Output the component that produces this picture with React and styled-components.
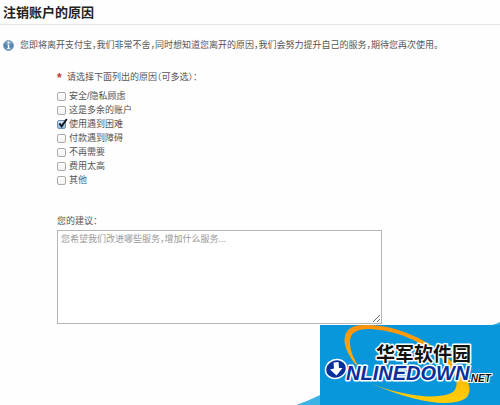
import React, { useState } from "react";
import styled, { createGlobalStyle } from "styled-components";

const reasons = [
	{ id: "safety", label: "安全/隐私顾虑" },
	{ id: "extra", label: "这是多余的账户" },
	{ id: "usage", label: "使用遇到困难" },
	{ id: "payment", label: "付款遇到障碍" },
	{ id: "unneeded", label: "不再需要" },
	{ id: "cost", label: "费用太高" },
	{ id: "other", label: "其他" },
];

export default function App() {
	const [selected, setSelected] = useState(["usage"]);

	const toggle = (id) =>
		setSelected((prev) =>
			prev.includes(id) ? prev.filter((x) => x !== id) : [...prev, id]
		);

	return (
		<Page>
			<GlobalStyle />
			<Title>注销账户的原因</Title>
			<Notice>
				<InfoIcon />
				<p>
					您即将离开支付宝，我们非常不舍，同时想知道您离开的原因，我们会努力提升自己的服务，期待您再次使用。
				</p>
			</Notice>
			<Form>
				<Reasons>
					<Legend>
						<Required>*</Required>请选择下面列出的原因（可多选）：
					</Legend>
					{reasons.map((reason) => (
						<Reason key={reason.id}>
							<Tick>
								<input
									type="checkbox"
									checked={selected.includes(reason.id)}
									onChange={() => toggle(reason.id)}
								/>
								{selected.includes(reason.id) && (
									<svg viewBox="0 0 11 11" aria-hidden="true">
										<path
											d="M2.4 5.4 4.6 8.4 9.8 1"
											fill="none"
											stroke="#10182a"
											strokeWidth="2"
										/>
									</svg>
								)}
							</Tick>
							{reason.label}
						</Reason>
					))}
				</Reasons>
				<SuggestLabel htmlFor="suggest">您的建议：</SuggestLabel>
				<Suggest
					id="suggest"
					placeholder="您希望我们改进哪些服务，增加什么服务..."
				/>
			</Form>
			<Watermark />
		</Page>
	);
}

function InfoIcon() {
	return (
		<svg width="11" height="11" viewBox="0 0 11 11" aria-hidden="true">
			<defs>
				<linearGradient id="info" x1="0" y1="0" x2="0" y2="1">
					<stop offset="0" stopColor="#a3bdd6" />
					<stop offset="0.5" stopColor="#4f80ae" />
					<stop offset="1" stopColor="#6fa3cb" />
				</linearGradient>
			</defs>
			<circle cx="5.5" cy="5.5" r="5" fill="url(#info)" stroke="#6f93b5" strokeWidth="0.8" />
			<circle cx="5.5" cy="2.8" r="1" fill="#fff" />
			<path d="M4.3 4.6h2v3.5h.7v.8H4.2v-.8h.7V5.4h-.6z" fill="#fff" />
		</svg>
	);
}

function Watermark() {
	return (
		<Mark viewBox="0 0 204 85" role="img" aria-label="华军软件园 ONLINEDOWN.NET">
			<defs>
				<linearGradient id="swoosh" x1="0" y1="0" x2="0" y2="1">
					<stop offset="0" stopColor="#ff9208" />
					<stop offset="1" stopColor="#ffce08" />
				</linearGradient>
			</defs>
			<path d="M0 85Q12 81 24 75V85Z" fill="#3bb3e6" />
			<path d="M196 5Q200 4 204 2V5Z" fill="#35aee4" />
			<rect x="24" y="5" width="180" height="80" fill="#0997dc" />
			<path
				d="M60 45C52 35 47 25 49 16C51 8 58 5 69 5C98 4 132 19 154 40C170 55 178 68 171 77C160 88 121 84 74 63C110 78 149 80 158 71C165 62 157 50 145 38C122 18 94 9 70 9C57 10 54 15 54 22C54 29 56 35 61 44Z"
				fill="url(#swoosh)"
			/>
			<MarkText x="80" y="41" $size={19} $fill="#111" $edge={3}>
				华军软件园
			</MarkText>
			<g transform="rotate(-20 40 49)">
				<ellipse cx="40" cy="49" rx="11.5" ry="10" fill="#fff" />
				<ellipse cx="40" cy="49" rx="10" ry="8.5" fill="#08309c" />
			</g>
			<path d="M37.5 42.5 42.5 42 43 48H46.5L40.5 55.5L34 49.5L38 48.6Z" fill="#fff" />
			<MarkText x="50" y="60" $size={20} $fill="#08309c" $edge={3} $italic>
				NLINEDOWN
			</MarkText>
			<MarkText x="172" y="62" $size={10} $fill="#111" $edge={2} $italic>
				.NET
			</MarkText>
		</Mark>
	);
}

const GlobalStyle = createGlobalStyle`
	* {
		box-sizing: border-box;
	}

	body {
		margin: 0;
		background: #fefefe;
		color: #555;
		font: 9px/14px "Liberation Sans", "Noto Sans CJK SC", sans-serif;
		font-feature-settings: "halt";
	}
`;

const Page = styled.main`
	position: relative;
	min-height: 100vh;
	overflow: hidden;
`;

const Title = styled.h1`
	margin: 0;
	padding: 3px 3px 1px;
	border-bottom: 1px solid #e6e6e6;
	color: #222;
	font-size: 13px;
	font-weight: 700;
	line-height: 20px;
`;

const Notice = styled.div`
	display: flex;
	align-items: center;
	gap: 6px;
	padding: 13px 3px 0;

	p {
		margin: 0;
	}

	svg {
		flex: none;
	}
`;

const Form = styled.form`
	padding: 18px 0 0 57px;
`;

const Reasons = styled.fieldset`
	display: flex;
	flex-direction: column;
	align-items: flex-start;
	margin: 0 0 27px;
	padding: 0;
	border: 0;
`;

const Legend = styled.legend`
	display: flex;
	align-items: center;
	gap: 5px;
	padding: 0 0 5px;
`;

const Required = styled.span`
	width: 5px;
	height: 12px;
	color: #b8392e;
	font-size: 12px;
	font-weight: 700;
`;

const Reason = styled.label`
	display: flex;
	align-items: center;
	gap: 3px;
`;

const Tick = styled.span`
	display: grid;
	width: 9px;
	height: 9px;

	input,
	svg {
		grid-area: 1 / 1;
	}

	input {
		appearance: none;
		width: 9px;
		height: 9px;
		margin: 0;
		border: 1px solid #aaa;
		border-radius: 2px;
		background: linear-gradient(#fff, #f1f1f1);
	}

	input:checked {
		border-color: #6f93b8;
		background: linear-gradient(#d5e7f5, #8fbce0);
	}

	svg {
		width: 11px;
		height: 11px;
		margin-top: -2px;
		pointer-events: none;
	}
`;

const SuggestLabel = styled.label`
	display: block;
	padding-bottom: 2px;
`;

const Suggest = styled.textarea`
	display: block;
	width: calc(100% - 118px);
	height: 94px;
	padding: 1px 3px;
	border: 1px solid #b5b5b5;
	background: #fff;
	color: #555;
	font: inherit;
	font-feature-settings: "halt";
	resize: both;

	&::placeholder {
		color: #999;
	}
`;

const Mark = styled.svg`
	position: absolute;
	right: 0;
	bottom: 0;
	width: 204px;
	height: 85px;
`;

const MarkText = styled.text`
	fill: ${({ $fill }) => $fill};
	stroke: #fff;
	stroke-width: ${({ $edge }) => $edge}px;
	stroke-linejoin: round;
	paint-order: stroke;
	font-size: ${({ $size }) => $size}px;
	font-style: ${({ $italic }) => ($italic ? "italic" : "normal")};
	font-weight: 700;
`;
